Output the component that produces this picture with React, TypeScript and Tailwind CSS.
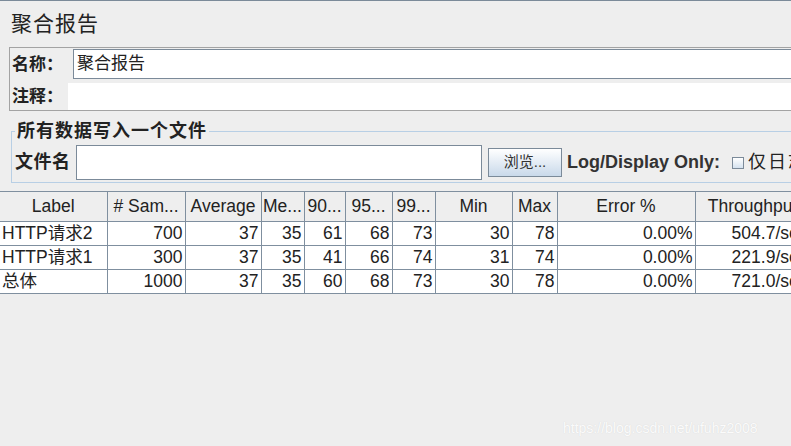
import React from "react"

const cols = [
  { name: "Label", w: 107 },
  { name: "# Sam...", w: 78 },
  { name: "Average", w: 76 },
  { name: "Me...", w: 43 },
  { name: "90...", w: 41 },
  { name: "95...", w: 47 },
  { name: "99...", w: 43 },
  { name: "Min", w: 77 },
  { name: "Max", w: 45 },
  { name: "Error %", w: 138 },
  { name: "Throughput", w: 115 },
]

const rows = [
  ["HTTP请求2", "700", "37", "35", "61", "68", "73", "30", "78", "0.00%", "504.7/sec"],
  ["HTTP请求1", "300", "37", "35", "41", "66", "74", "31", "74", "0.00%", "221.9/sec"],
  ["总体", "1000", "37", "35", "60", "68", "73", "30", "78", "0.00%", "721.0/sec"],
]

const cjk = "font-['Liberation_Sans','Noto_Sans_CJK_SC',sans-serif]"

export default function AggregateReport() {
  return (
    <div className={`w-[791px] h-[446px] overflow-hidden relative bg-[#eeeeee] text-[#222] ${cjk}`}>
      <div className="w-[1000px]">
        {/* top edge */}
        <div className="h-px bg-[#7b8a99]" />

        {/* Title */}
        <div className="h-[46px] flex items-center pl-[11px] text-[21px] tracking-[1px] text-[#222]">
          聚合报告
        </div>

        {/* Name / comment panel */}
        <div className="ml-[9px] border border-[#a3a3a3] pt-px pl-[2px] h-[64px]">
          <div className="flex items-center h-[30px]">
            <span className="w-[61px] text-[17px] font-bold leading-none">名称：</span>
            <div className="flex-1 h-[30px] bg-white border border-[#7b8a99] flex items-center pl-[3px] text-[17px]">
              聚合报告
            </div>
          </div>
          <div className="flex items-center h-[27px] mt-[4px]">
            <span className="w-[56px] text-[17px] font-bold leading-none">注释：</span>
            <div className="flex-1 h-[27px] bg-white" />
          </div>
        </div>

        {/* File group */}
        <fieldset className="ml-[11px] mt-[10px] border border-[#b8cfe5] pl-[3px] pt-[4px] pb-[2px]">
          <legend className="px-[2px] text-[18px] leading-[20px] font-bold tracking-[1px]">所有数据写入一个文件</legend>
          <div className="flex items-center h-[35px]">
            <span className="w-[61px] text-[18px] font-bold tracking-[0.5px]">文件名</span>
            <div className="w-[406px] h-[35px] bg-white border border-[#7b8a99]" />
            <button className="ml-[6px] w-[74px] h-[29px] border border-[#7b8a99] bg-gradient-to-b from-white to-[#c9d9ea] text-[15px] text-[#333]">
              浏览...
            </button>
            <span className="ml-[5px] text-[18px] font-bold text-[#333]">Log/Display Only:</span>
            <span className="ml-[12px] w-[12px] h-[12px] border border-[#7b8a99] bg-gradient-to-b from-white to-[#d5e2ef]" />
            <span className="ml-[4px] text-[18px] tracking-[2px]">仅日志错误</span>
          </div>
        </fieldset>

        {/* Results table */}
        <table className="mt-[8px] table-fixed border-collapse text-[17.5px]" style={{ width: 810 }}>
          <colgroup>
            {cols.map(c => (
              <col key={c.name} style={{ width: c.w }} />
            ))}
          </colgroup>
          <thead>
            <tr className="h-[30px] bg-[#eeeeee]">
              {cols.map(c => (
                <th
                  key={c.name}
                  className="font-normal text-center whitespace-nowrap overflow-hidden border-t border-b border-r border-[#7f8f9f]"
                >
                  {c.name}
                </th>
              ))}
            </tr>
          </thead>
          <tbody>
            {rows.map(r => (
              <tr key={r[0]} className="h-[24px] bg-white">
                {r.map((v, i) => (
                  <td
                    key={i}
                    className={`border-b border-r border-[#7f8f9f] whitespace-nowrap overflow-hidden leading-none ${i === 0 ? "text-left pl-[2px]" : "text-right pr-[2px]"}`}
                  >
                    {v}
                  </td>
                ))}
              </tr>
            ))}
          </tbody>
        </table>
      </div>

      {/* watermark */}
      <div className="absolute left-[563px] top-[418px] text-[14px] text-white/90 font-['Liberation_Sans',sans-serif] [text-shadow:0_0_1px_#cfcfcf]">
        https://blog.csdn.net/ufuhz2008
      </div>
    </div>
  )
}
